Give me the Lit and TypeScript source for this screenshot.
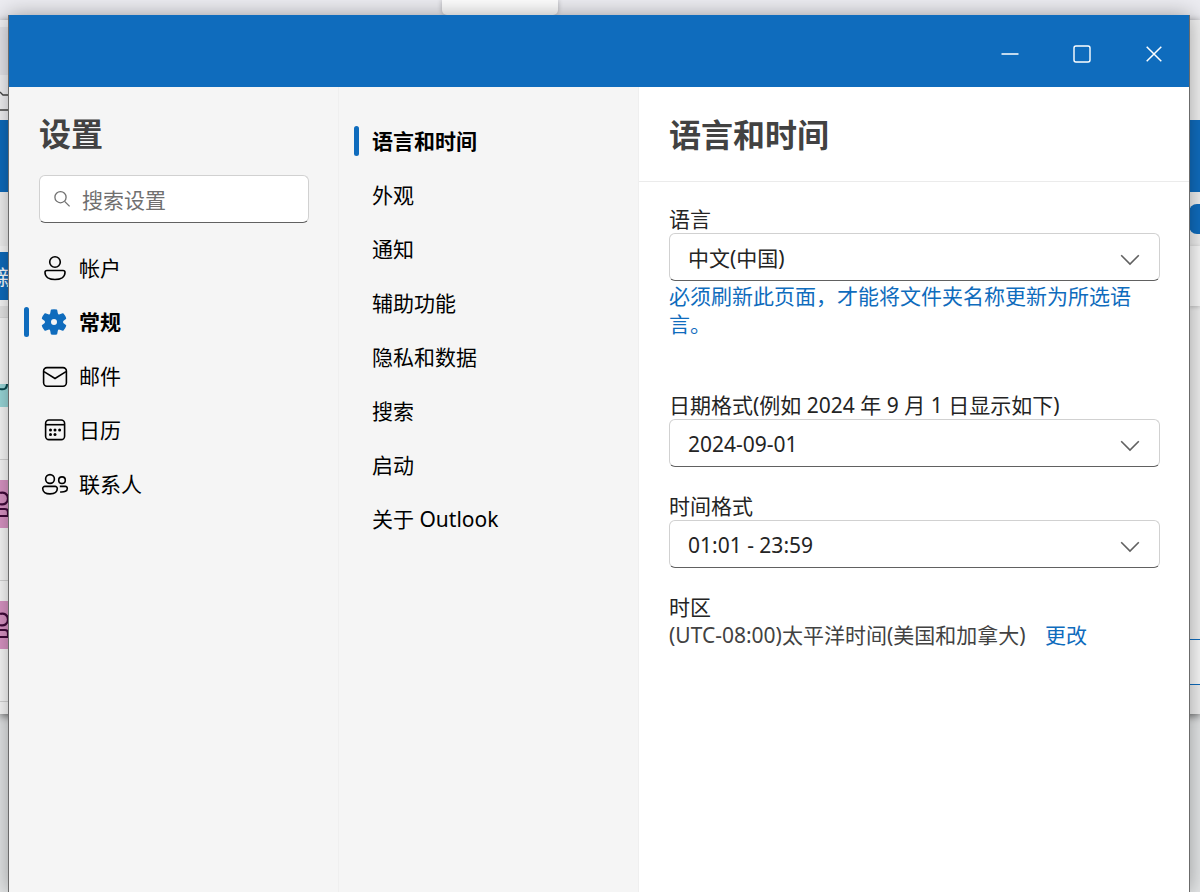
import { LitElement, html, css, svg } from "lit";
import { customElement, state } from "lit/decorators.js";
import { classMap } from "lit/directives/class-map.js";

const icons: Record<string, unknown> = {
  account: svg`<circle cx="15" cy="9" r="5.3"/><path d="M7 17.5h16a2 2 0 0 1 2 2c0 4.6-4.5 7-10 7s-10-2.4-10-7a2 2 0 0 1 2-2z"/>`,
  general: svg`<g transform="translate(-1 0) scale(1.5)" fill="#0f6cbd" stroke="none"><path fill-rule="evenodd" d="M1.91 7.38A8.5 8.5 0 0 1 3.7 4.3a.5.5 0 0 1 .54-.13l1.92.68a1 1 0 0 0 1.32-.76l.36-2a.5.5 0 0 1 .4-.4 8.53 8.53 0 0 1 3.55 0c.2.04.35.2.38.4l.37 2a1 1 0 0 0 1.32.76l1.92-.68a.5.5 0 0 1 .54.13 8.5 8.5 0 0 1 1.78 3.08c.06.2 0 .4-.15.54l-1.56 1.32a1 1 0 0 0 0 1.52l1.56 1.32a.5.5 0 0 1 .15.54 8.5 8.5 0 0 1-1.78 3.08.5.5 0 0 1-.54.13l-1.92-.68a1 1 0 0 0-1.32.76l-.37 2a.5.5 0 0 1-.38.4 8.53 8.53 0 0 1-3.56 0 .5.5 0 0 1-.39-.4l-.36-2a1 1 0 0 0-1.32-.76l-1.92.68a.5.5 0 0 1-.54-.13 8.5 8.5 0 0 1-1.78-3.08.5.5 0 0 1 .15-.54l1.56-1.32a1 1 0 0 0 0-1.52L2.06 7.92a.5.5 0 0 1-.15-.54ZM8 10a2 2 0 1 0 4 0 2 2 0 0 0-4 0Z"/></g>`,
  mail: svg`<rect x="3.6" y="6.6" width="22.8" height="18.6" rx="3.4"/><path d="M4 10.6l11 6.9 11-6.9"/>`,
  calendar: svg`<rect x="5.6" y="5" width="19" height="19.6" rx="3.4"/><path d="M5.6 9.7h19"/><g fill="#000" stroke="none"><circle cx="10.5" cy="15" r="1.5"/><circle cx="15" cy="15" r="1.5"/><circle cx="19.6" cy="15" r="1.5"/><circle cx="10.5" cy="19.5" r="1.5"/><circle cx="15" cy="19.5" r="1.5"/></g>`,
  people: svg`<circle cx="10" cy="10" r="4.4"/><circle cx="22" cy="11.2" r="3.3"/><path d="M5 17.4h10a2.2 2.2 0 0 1 2.3 2.2c0 3.4-3 5.3-7.3 5.3s-7.3-1.9-7.3-5.3A2.2 2.2 0 0 1 5 17.4z"/><path d="M19.8 17.4h5.4a2 2 0 0 1 2.1 2c0 2.6-2.6 4-7.2 3.6"/>`,
};

const categories = [
  { id: "account", label: "帐户" },
  { id: "general", label: "常规" },
  { id: "mail", label: "邮件" },
  { id: "calendar", label: "日历" },
  { id: "people", label: "联系人" },
];

const sections = ["语言和时间", "外观", "通知", "辅助功能", "隐私和数据", "搜索", "启动", "关于 Outlook"];

@customElement("mail-backdrop")
export class MailBackdrop extends LitElement {
  static styles = css`
    :host { display: block; background: linear-gradient(#ececf1 20px, #e3e5e6 20px); overflow: hidden; }
    .tab {
      position: absolute; left: 442px; top: 0; width: 116px; height: 15px;
      border-radius: 0 0 5px 5px; background: #fdfdfd; box-shadow: 0 0 5px #0004;
    }
    .mail {
      display: grid; grid-template-columns: 9px 1fr 11px; height: 694px; margin-top: 20px;
      background: #fafafa; box-shadow: 0 2px 8px #0008; overflow: hidden;
    }
    .strip { display: flex; flex-direction: column; overflow: hidden; }
    .strip.right { grid-column: 3; background: #eeeeee; }
    .strip > * { flex: none; }
    .head { height: 100px; background: #f3f3f6; }
    .head svg { display: block; width: 9px; height: 100px; }
    .head.plain { background: #f0f0f0; }
    .bar { height: 72px; background: #0f6cbd; }
    .ribbon { height: 54px; background: #f2f2f2; }
    .compose {
      height: 48px; margin: 6px 0; padding-left: 6px; background: #0f6cbd; color: #fff;
      font: 21px/48px "Noto Sans CJK SC", sans-serif; display: flex; justify-content: center;
    }
    .shade { height: 12px; background: #e8e8e8; border-bottom: 1px solid #ddd; box-sizing: border-box; }
    .row { height: 120px; border-bottom: 1px solid #d5d5d5; display: flex; align-items: flex-start; }
    .row .avatar { margin-top: 20px; }
    .row.first { height: 141px; }
    .row.first .avatar { height: 23px; margin-top: 66px; background: #9bd9db; }
    .avatar { width: 9px; height: 48px; background: #da95c5; }
    .avatar svg { display: block; width: 9px; height: 100%; }
    .pill { height: 30px; margin: 12px 0; border-radius: 8px 0 0 8px; background: #0f6cbd; }
    .card { height: 60px; background: #f8f8f8; box-shadow: 0 1px 4px #0003; }
    .box { height: 44px; margin-top: 333px; background: #f8f8f8; border: solid #0f6cbd; border-width: 1px 0; }
  `;

  private avatar = html`<div class="row"><div class="avatar"><svg viewBox="0 0 9 48" fill="none" stroke="#3f0838" stroke-width="2.2"><path d="M0 13c4-1.500 8 1 8 5.500s-4 7-8 5.500M0 29h5q3 0 3 3v4H0"/></svg></div></div>`;

  render() {
    return html`
      <div class="mail">
        <div class="strip">
          <div class="head"><svg viewBox="0 0 9 100" fill="none" stroke="#444" stroke-width="1.3"><path fill="#e6e6eb" stroke="none" d="M0 7h9v48H0z"/><path d="M0 72l3 3h6M0 90h9"/></svg></div>
          <div class="bar"></div>
          <div class="ribbon"></div>
          <div class="compose">新</div>
          <div class="shade"></div>
          <div class="row first"><div class="avatar"><svg viewBox="0 0 9 23" fill="none" stroke="#0b4a50" stroke-width="2"><path d="M0 5c4 1 7 0 7-5"/></svg></div></div>
          ${this.avatar}${this.avatar}
        </div>
        <div class="strip right">
          <div class="head plain"></div>
          <div class="bar"></div>
          <div class="pill"></div>
          <div class="card"></div>
          <div class="box"></div>
        </div>
      </div>
      <div class="tab"></div>
    `;
  }
}

@customElement("app-root")
export class AppRoot extends LitElement {
  static styles = css`
    :host {
      display: block; position: relative; height: 100vh; overflow: hidden; box-sizing: border-box;
      padding: 15px 10px 0 8px; color: #000;
      font: 21px/28px "Noto Sans", "Noto Sans CJK SC", sans-serif;
    }
    * { box-sizing: border-box; }
    button, input, select { font: inherit; color: inherit; margin: 0; }
    button { border: 0; background: none; padding: 0; text-align: left; }
    h1, h2, p { margin: 0; }
    svg { display: block; fill: none; stroke: currentColor; flex: none; }
    .backdrop { position: absolute; inset: 0; }
    .window {
      position: relative; height: 100%; display: flex; flex-direction: column;
      border: solid #6b6b6b; border-width: 0 1px; box-shadow: 0 0 20px #0005; background: #fff;
    }
    .titlebar { height: 72px; flex: none; background: #0f6cbd; display: flex; justify-content: flex-end; color: #fff; }
    .titlebar button { width: 72px; padding: 6px 0 0 2px; display: grid; place-items: center; }
    .content { flex: 1; min-height: 0; display: grid; grid-template-columns: 330px 300px 1fr; }
    .categories, .sections { background: #f5f5f5; border-right: 1px solid #efefef; }
    .categories h1 { padding: 23px 0 1px 30px; }
    h1, h2 { font-size: 32px; line-height: 48px; font-weight: 700; color: #424242; }
    .search {
      display: flex; align-items: center; gap: 10px; height: 48px; margin: 16px 29px 18px 30px; padding: 0 12px;
      background: #fff; border: 1px solid #d1d1d1; border-bottom-color: #616161; border-radius: 6px; color: #707070;
    }
    .search input { flex: 1; min-width: 0; border: 0; padding: 2px 0 0; background: none; outline: 0; }
    .search input::placeholder { color: #707070; opacity: 1; }
    .item { display: flex; align-items: center; width: 100%; height: 54px; padding-left: 15px; }
    .mark { width: 5px; height: 30px; border-radius: 3px; }
    .selected .mark { background: #0f6cbd; }
    .selected { font-weight: 700; }
    .categories .item svg { margin: 0 9px 0 11px; stroke-width: 1.6; }
    .sections { padding-top: 27px; }
    .sections .item span + span { margin-left: 13px; }
    .pane { min-width: 0; }
    .pane header { padding: 24px 30px 22px; border-bottom: 1px solid #ebebeb; }
    .fields { padding: 23px 29px 23px 30px; display: flex; flex-direction: column; gap: 25px; color: #242424; }
    .fields label { display: block; }
    .pick { display: grid; align-items: center; }
    .pick > * { grid-area: 1 / 1; }
    .pick select {
      appearance: none; width: 100%; height: 48px; padding: 2px 48px 0 18px; background: #fff;
      border: 1px solid #d1d1d1; border-bottom-color: #616161; border-radius: 6px;
    }
    .pick svg { justify-self: end; margin: 6px 20px 0 0; color: #616161; pointer-events: none; }
    .hint { color: #0f6cbd; padding: 1px 0 28px; }
    .zone { color: #424242; }
    .zone a { color: #0f6cbd; text-decoration: none; margin-left: 14px; }
  `;

  @state() private category = "general";
  @state() private section = sections[0];

  private picker(id: string, label: string, value: string) {
    return html`
      <label for=${id}>${label}</label>
      <div class="pick">
        <select id=${id}><option>${value}</option></select>
        <svg width="20" height="12" viewBox="0 0 20 12" stroke-width="1.6"><path d="M1.2 1.2L10 10l8.8-8.8"/></svg>
      </div>
    `;
  }

  render() {
    return html`
      <mail-backdrop class="backdrop" aria-hidden="true"></mail-backdrop>
      <div class="window">
        <div class="titlebar">
          <button aria-label="最小化"><svg width="20" height="20" stroke-width="1.5"><path d="M1.5 10h17"/></svg></button>
          <button aria-label="最大化"><svg width="20" height="20" stroke-width="1.4"><rect x="2" y="2" width="16" height="16" rx="2"/></svg></button>
          <button aria-label="关闭"><svg width="20" height="20" stroke-width="1.5"><path d="M2.7 2.7l14.6 14.6M17.3 2.7L2.7 17.3"/></svg></button>
        </div>
        <div class="content">
          <nav class="categories">
            <h1>设置</h1>
            <label class="search">
              <svg width="20" height="20" stroke-width="1.3"><circle cx="8.5" cy="8.2" r="5.6"/><path d="M12.6 12.4l5 5"/></svg>
              <input type="text" placeholder="搜索设置" aria-label="搜索设置" />
            </label>
            ${categories.map(
              (c) => html`<button class=${classMap({ item: true, selected: c.id === this.category })} @click=${() => (this.category = c.id)}>
                <span class="mark"></span><svg width="30" height="30" viewBox="0 0 30 30">${icons[c.id]}</svg><span>${c.label}</span>
              </button>`,
            )}
          </nav>
          <nav class="sections">
            ${sections.map(
              (s) => html`<button class=${classMap({ item: true, selected: s === this.section })} @click=${() => (this.section = s)}>
                <span class="mark"></span><span>${s}</span>
              </button>`,
            )}
          </nav>
          <main class="pane">
            <header><h2>语言和时间</h2></header>
            <div class="fields">
              <div>
                ${this.picker("language", "语言", "中文(中国)")}
                <p class="hint">必须刷新此页面，才能将文件夹名称更新为所选语言。</p>
              </div>
              <div>${this.picker("date", "日期格式(例如 2024 年 9 月 1 日显示如下)", "2024-09-01")}</div>
              <div>${this.picker("time", "时间格式", "01:01 - 23:59")}</div>
              <div>
                <p>时区</p>
                <p class="zone">(UTC-08:00)太平洋时间(美国和加拿大) <a href="#">更改</a></p>
              </div>
            </div>
          </main>
        </div>
      </div>
    `;
  }
}
